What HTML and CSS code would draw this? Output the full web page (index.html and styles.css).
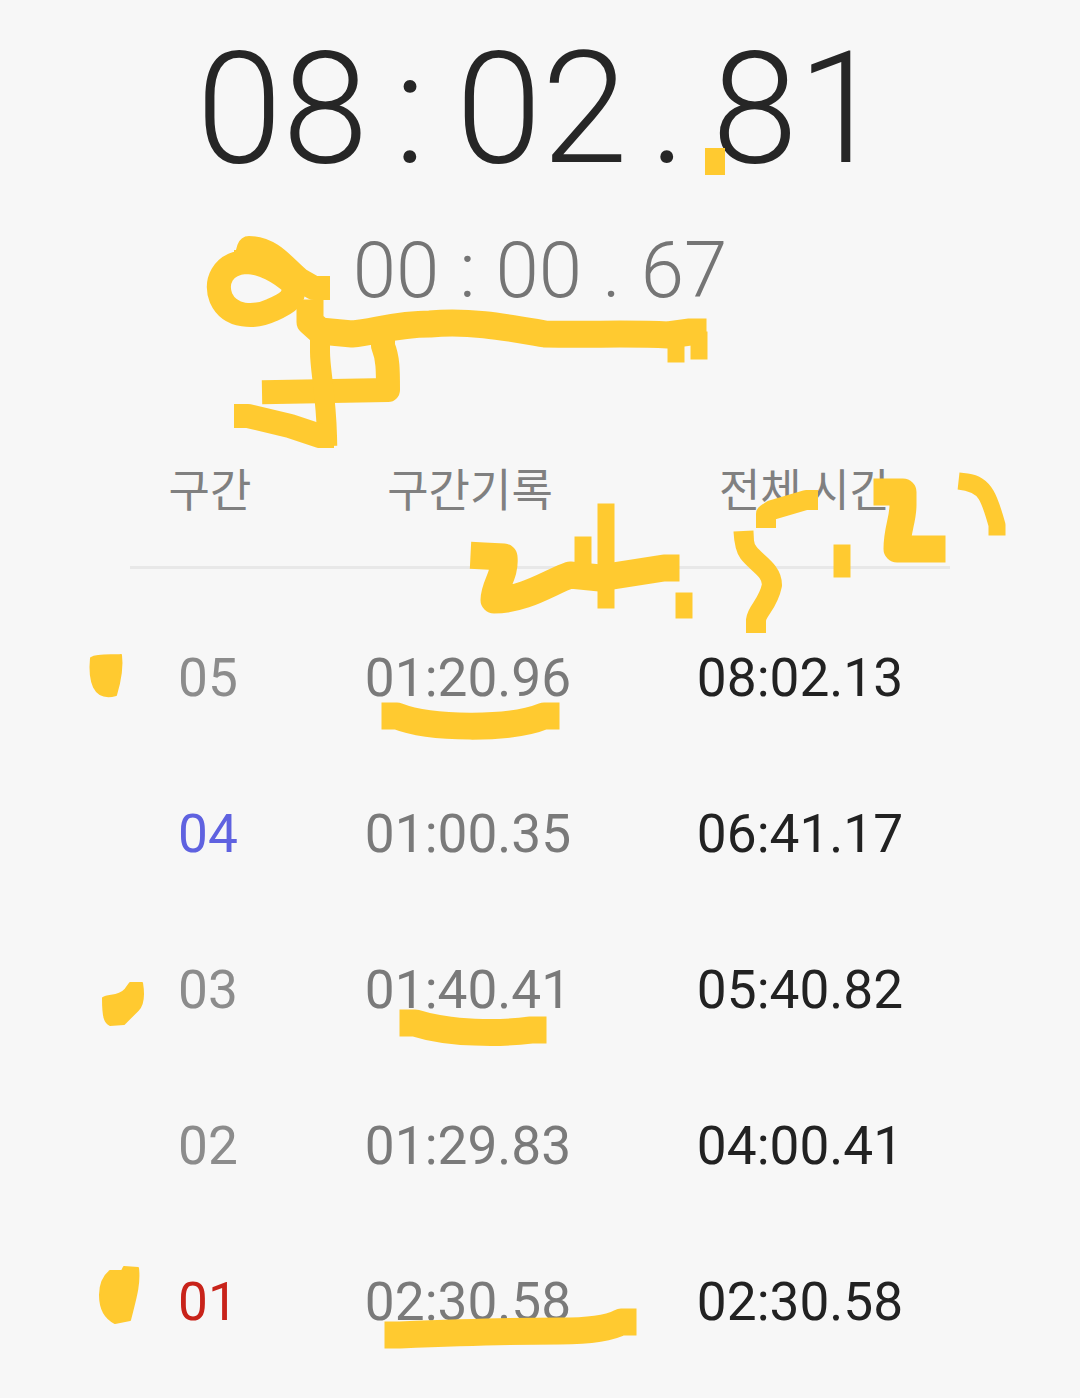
FILE: index.html
```html
<!DOCTYPE html>
<html lang="ko">
<head>
<meta charset="UTF-8">
<meta name="viewport" content="width=device-width, initial-scale=1.0">
<title>스톱워치</title>
<link rel="stylesheet" href="styles.css">
</head>
<body>

<div class="timer timer-main">
<span>08</span><span class="colon">:</span><span>02</span><span class="dot">.</span><span>81</span>
</div>
<div class="timer timer-lap">
<span>00</span><span>:</span><span>00</span><span>.</span><span>67</span>
</div>

<div class="laps">
<div class="row head">
<div>구간</div>
<div>구간기록</div>
<div class="head-total">전체 시간</div>
</div>
<div class="row lap">
<div class="num">05</div>
<div class="split">01:20.96</div>
<div class="total">08:02.13</div>
</div>
<div class="row lap">
<div class="num fastest">04</div>
<div class="split">01:00.35</div>
<div class="total">06:41.17</div>
</div>
<div class="row lap">
<div class="num">03</div>
<div class="split">01:40.41</div>
<div class="total">05:40.82</div>
</div>
<div class="row lap">
<div class="num">02</div>
<div class="split">01:29.83</div>
<div class="total">04:00.41</div>
</div>
<div class="row lap">
<div class="num slowest">01</div>
<div class="split">02:30.58</div>
<div class="total">02:30.58</div>
</div>
</div>

<!-- 노란 펜 낙서 -->
<svg class="marker" viewBox="0 0 1080 1398" width="1080" height="1398" aria-hidden="true">
<g class="pen">
<path class="thin" d="M715 158 L715 165"/>
<path d="M318 288 L314 288 L300 280 C285 268 272 248 249 248 L245 262 C222 264 215 282 221 298 C230 318 255 318 272 310 C288 303 296 298 293 284 C280 272 262 262 246 262"/>
<path class="thick" d="M310 313 L310 322 L320 331 L352 334 C375 332 395 324 430 324 C470 320 510 328 545 334 C590 335 630 333 668 335 L690 332 L693 332"/>
<path class="fine" d="M676 346 L676 354"/>
<path class="fine" d="M699 340 L699 351"/>
<path d="M383 340 L383 346 C388 358 388 370 388 390 L274 392"/>
<path class="thin" d="M320 348 L320 352 C320 370 326 395 327 436"/>
<path d="M246 416 L248 416 L290 426 L320 436 L322 436"/>
<path class="thick" d="M484 556 L504 557 C506 575 494 585 494 600 C525 600 550 582 570 575 L600 578 L664 568 L666 568"/>
<path class="fine" d="M606 512 L606 600"/>
<path class="fine" d="M583 545 L583 575"/>
<path class="fine" d="M684 601 L684 610"/>
<path class="thin" d="M766 518 L766 514 L772 510 L806 500 L808 500"/>
<path class="thin" d="M744 541 C745 560 772 565 772 585 C768 605 757 610 756 620 L756 623"/>
<path class="fine" d="M842 553 L842 569"/>
<path class="thick" d="M887 492 L903 492 L903 505 C903 520 897 530 897 549 L931 549 L932 549"/>
<path class="fine" d="M967 482 C985 484 990 500 997 525 L997 527"/>
<path class="thick" d="M395 716 L397 716 C430 729 510 730 544 716 L546 716"/>
<path class="thick" d="M413 1023 L415 1023 C450 1034 500 1034 531 1030 L533 1030"/>
<path class="thick" d="M398 1335 L400 1335 C450 1333 500 1331 560 1331 C590 1331 610 1328 621 1322 L623 1322"/>
</g>
<g class="blob">
<path d="M91 658 C98 654 112 656 121 655 C123 670 119 685 116 695 C105 698 98 695 94 687 C90 678 90 668 91 658 Z"/>
<path d="M103 998 C108 994 118 998 125 990 L130 983 L142 983 C144 995 143 1005 138 1010 C132 1016 128 1020 124 1024 L110 1025 C105 1022 103 1018 103 998 Z"/>
<path d="M110 1271 L122 1271 L124 1267 L138 1268 C140 1285 135 1300 130 1320 L115 1323 C105 1318 100 1308 100 1295 C100 1285 104 1276 110 1271 Z"/>
</g>
</svg>

</body>
</html>
```

FILE: styles.css
```css
html, body {
  margin: 0;
  background: #f7f7f7;
}
body {
  position: relative;
  width: 1080px;
  height: 1398px;
  overflow: hidden;
  font-family: Roboto, "Noto Sans CJK KR", sans-serif;
}

/* 상단 타이머 */
.timer {
  display: flex;
  justify-content: center;
}
.timer-main {
  gap: 25.5px;
  padding-top: 18px;
  height: 182px;
  font-size: 155px;
  line-height: 182px;
  font-weight: 300;
  color: #262626;
}
.timer-main .colon {
  margin-right: 4px;
}
.timer-main .dot {
  margin-left: -4px;
}
.timer-lap {
  gap: 20px;
  margin-top: 26px;
  height: 90px;
  font-size: 78px;
  line-height: 90px;
  font-weight: 300;
  color: #757575;
}

/* 구간 목록 */
.laps {
  margin: 0 130px;
  padding-top: 146px;
}
.row {
  display: grid;
  grid-template-columns: 156px 364px 300px;
  text-align: center;
}
.head {
  height: 104px;
  padding-left: 2px;
  border-bottom: 3px solid #e8e8e8;
  font-family: "Noto Sans CJK KR", sans-serif;
  font-size: 45px;
  line-height: 52px;
  color: #808080;
}
.head-total {
  padding-left: 6px;
  word-spacing: -6px;
}
.lap {
  height: 156px;
  font-size: 53.2px;
  line-height: 156px;
}
.head + .lap {
  margin-top: 31px;
}
.num {
  color: #8c8c8c;
}
.num.fastest {
  color: #5f62e0;
}
.num.slowest {
  color: #c8231a;
}
.split {
  color: #7a7a7a;
}
.total {
  color: #222222;
}

/* 펜 자국 */
.marker {
  position: absolute;
  top: 0;
  left: 0;
}
.pen path {
  fill: none;
  stroke: #ffca30;
  stroke-width: 24px;
  stroke-linecap: square;
  stroke-linejoin: round;
}
.pen path.thick {
  stroke-width: 27px;
}
.pen path.thin {
  stroke-width: 20px;
}
.pen path.fine {
  stroke-width: 17px;
}
.blob path {
  fill: #ffca30;
  stroke: #ffca30;
  stroke-width: 2px;
  stroke-linejoin: round;
}
```
